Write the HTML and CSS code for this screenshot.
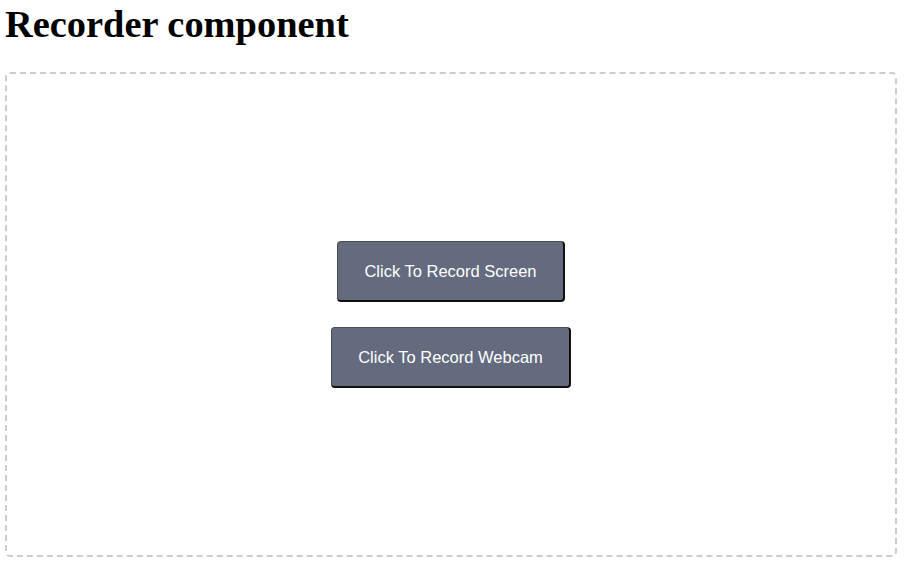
FILE: index.html
```html
<!DOCTYPE html>
<html>
<head>
<meta charset="utf-8">
<title>Recorder component</title>
<link rel="stylesheet" href="styles.css">
</head>
<body>
<div class="page">
  <h1 class="title">Recorder component</h1>
  <div class="recorder">
    <button class="rec-btn">Click To Record Screen</button>
    <button class="rec-btn">Click To Record Webcam</button>
  </div>
</div>
</body>
</html>
```

FILE: styles.css
```css
html, body {
  margin: 0;
  padding: 0;
  background: #ffffff;
}

.page {
  padding: 0 9px 6px 5px;
  display: flex;
  flex-direction: column;
  height: 563px;
  box-sizing: border-box;
}

.title {
  font-family: "Liberation Serif", "Times New Roman", serif;
  font-weight: bold;
  font-size: 38.4px;
  line-height: 44px;
  margin: 2px 0 26px 0;
  color: #000;
}

.recorder {
  flex: 1;
  border: 2px dashed #cccccc;
  border-radius: 5px;
  display: flex;
  flex-direction: column;
  align-items: center;
  justify-content: center;
  gap: 25px;
}

.rec-btn {
  font-family: "Liberation Sans", Arial, sans-serif;
  font-size: 16.5px;
  line-height: 19px;
  color: #ffffff;
  background: #646b7e;
  border-style: solid;
  border-width: 1px 2px 2px 1px;
  border-color: #4d4d4d #111111 #111111 #4d4d4d;
  border-radius: 4px;
  padding: 20px 26px 19px 26px;
  cursor: pointer;
}
```
